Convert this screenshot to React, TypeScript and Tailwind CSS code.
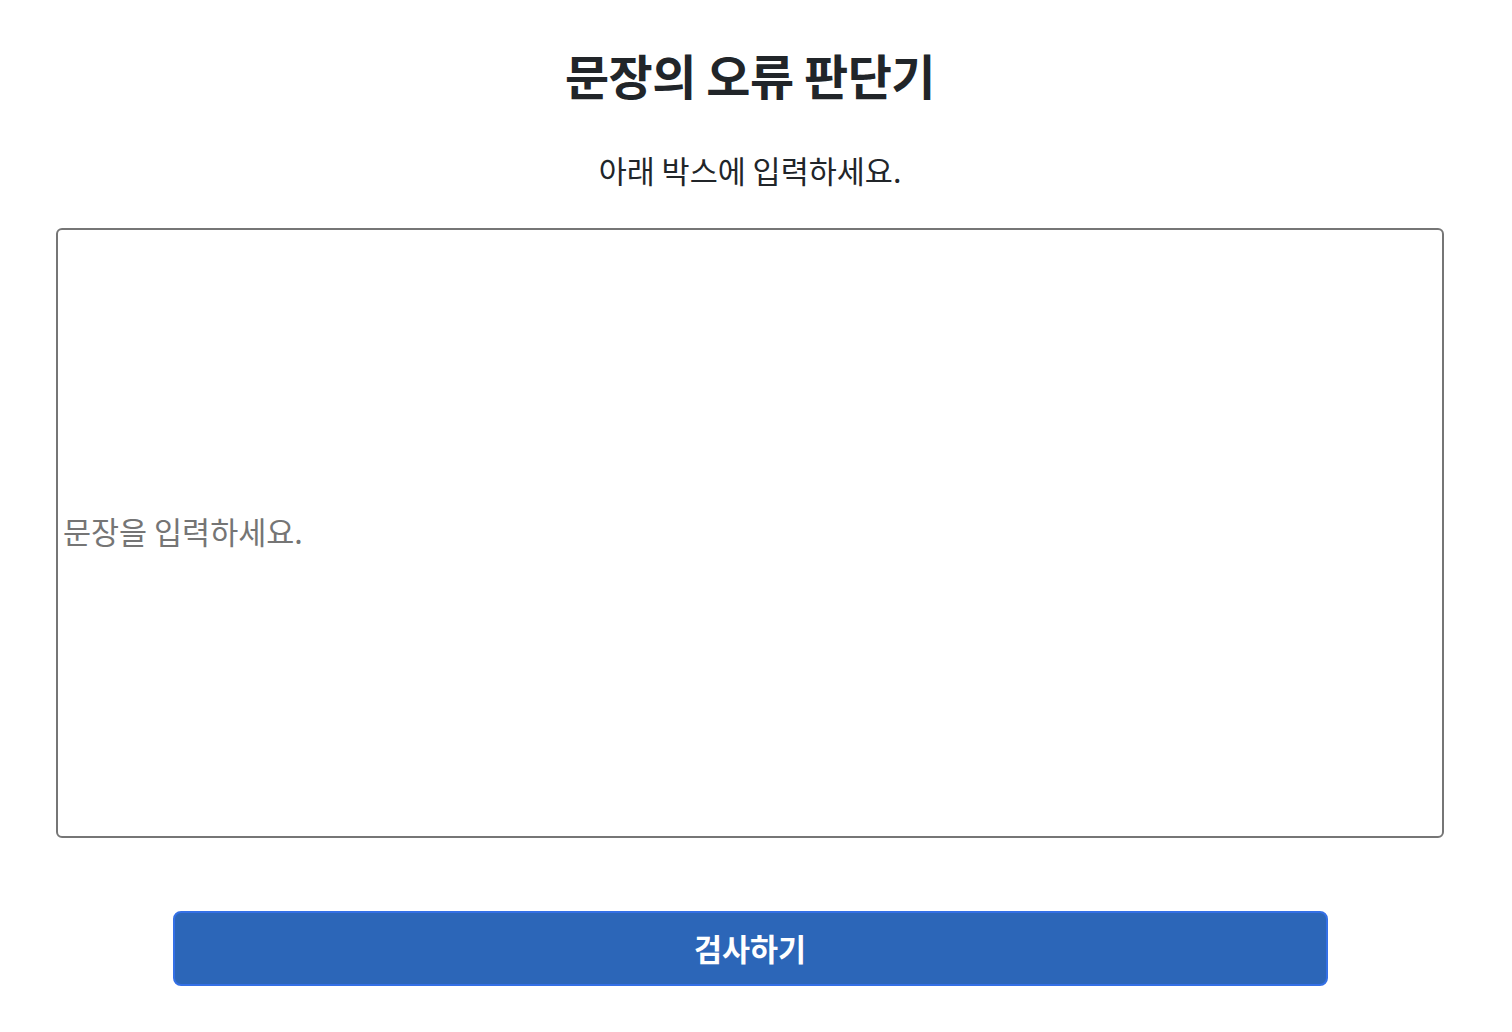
import {useState} from "react";

const App = function App() {
    const [text, setText] = useState("");

    return (
        <div
            className="min-h-screen w-[1500px] bg-white flex flex-col items-center text-[#212529]"
            style={{fontFamily: '"Noto Sans CJK KR", "Noto Sans", sans-serif'}}
        >
            <h1 className="mt-[42px] text-[48px] leading-[64px] font-bold tracking-[-0.5px]">
                문장의 오류 판단기
            </h1>
            <p className="mt-[44px] text-[30.5px] leading-[40px]">아래 박스에 입력하세요.</p>
            <div className="mt-[38px] w-full px-[56px]">
                <input
                    type="text"
                    value={text}
                    onChange={(e) => setText(e.target.value)}
                    placeholder="문장을 입력하세요."
                    className="block w-full h-[610px] border-2 border-[#767676] rounded-[6px] px-[5px] pb-[4px] text-[30.5px] outline-none placeholder:text-[#757575]"
                />
            </div>
            <button
                type="button"
                className="mt-[73px] w-[1155px] h-[75px] rounded-[8px] border-2 border-[#3470e6] bg-[#2c66b8] text-white text-[30.5px] font-bold"
            >
                검사하기
            </button>
        </div>
    );
};

export default App;
